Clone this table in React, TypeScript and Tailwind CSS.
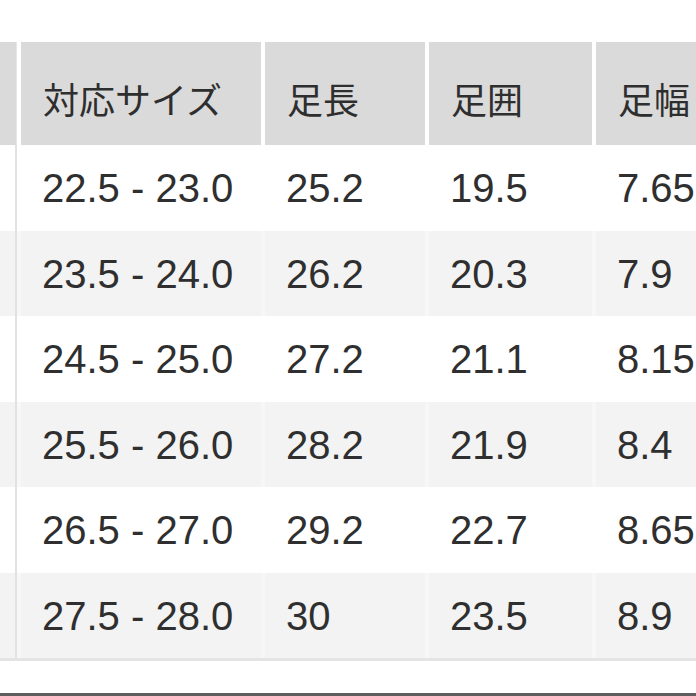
const headers = ["対応サイズ", "足長", "足囲", "足幅"];

const rows: string[][] = [
  ["22.5 - 23.0", "25.2", "19.5", "7.65"],
  ["23.5 - 24.0", "26.2", "20.3", "7.9"],
  ["24.5 - 25.0", "27.2", "21.1", "8.15"],
  ["25.5 - 26.0", "28.2", "21.9", "8.4"],
  ["26.5 - 27.0", "29.2", "22.7", "8.65"],
  ["27.5 - 28.0", "30", "23.5", "8.9"],
];

const grid = "grid grid-cols-[17px_240px_160px_163px_1fr] gap-x-[4px]";

export default function App() {
  return (
    <div className="flex h-[696px] w-[696px] flex-col overflow-hidden bg-white font-['Liberation_Sans',Arial,sans-serif] text-[#2f2f2f]">
      <div className="h-[42px] shrink-0" />

      {/* header */}
      <div className={`${grid} h-[103px] shrink-0 bg-white`}>
        <div className="border-r border-[#e6e6e6] bg-[#dadada]" />
        {headers.map((h) => (
          <div
            key={h}
            className="flex items-center bg-[#dadada] pl-[22px] pt-[9px] font-['Noto_Sans_CJK_JP',sans-serif] text-[36px] leading-none text-[#2e2e2e]"
          >
            {h}
          </div>
        ))}
      </div>

      {/* body */}
      {rows.map((r, i) => {
        const odd = i % 2 === 1;
        return (
          <div
            key={r[0]}
            className={`${grid} h-[85.5px] shrink-0 ${odd ? "bg-[#f7f7f7]" : "bg-white"}`}
          >
            <div className={`border-r-2 border-[#e2e2e2] ${odd ? "bg-[#f3f3f3]" : "bg-white"}`} />
            {r.map((c, j) => (
              <div
                key={j}
                className={`flex items-center pl-[21px] pt-[1px] text-[40px] leading-none ${odd ? "bg-[#f3f3f3]" : "bg-white"}`}
              >
                {c}
              </div>
            ))}
          </div>
        );
      })}

      <div className="h-[3px] shrink-0 bg-[#e4e4e4]" />
      <div className="flex-1" />
      <div className="h-[3px] shrink-0 bg-[#5e5e5e]" />
    </div>
  );
}
